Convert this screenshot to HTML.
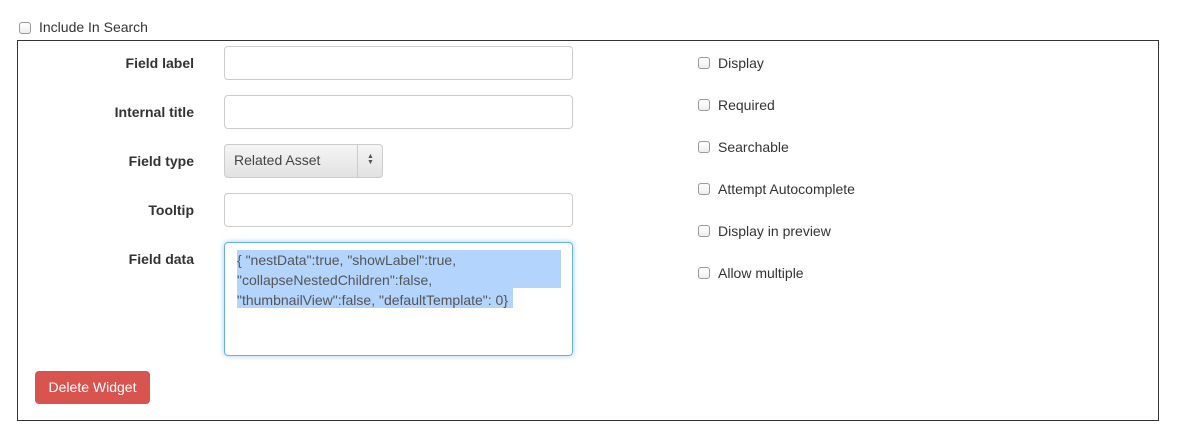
<!DOCTYPE html>
<html><head><style>
body{margin:0;width:1187px;height:440px;background:#fff;font-family:"Liberation Sans",sans-serif;font-size:14px;color:#333;position:relative;overflow:hidden}
.a{position:absolute}
.cb{position:absolute;width:10px;height:10px;border:1px solid #999;border-radius:3px;background:linear-gradient(#fff,#eee)}
.lbl{position:absolute;font-weight:bold;text-align:right;width:180px;left:14px}
.inp{position:absolute;left:224px;width:347px;height:32px;border:1px solid #ccc;border-radius:4px;background:#fff}
.ck{position:absolute;left:718px;font-size:14px}
</style></head><body>
<div class="cb" style="left:19px;top:22px"></div>
<div class="a" style="left:39px;top:19px">Include In Search</div>
<div class="a" style="left:17px;top:40px;width:1140px;height:379px;border:1px solid #333"></div>

<div class="lbl" style="top:55px">Field label</div>
<div class="inp" style="top:46px"></div>
<div class="lbl" style="top:104px">Internal title</div>
<div class="inp" style="top:95px"></div>
<div class="lbl" style="top:153px">Field type</div>
<div class="a" style="left:224px;top:144px;width:157px;height:32px;border:1px solid #ccc;border-radius:4px;background:linear-gradient(#f5f5f5,#e2e2e2)">
<div class="a" style="left:9px;top:7px;color:#444">Related Asset</div>
<div class="a" style="left:132px;top:0;width:1px;height:32px;background:#ccc"></div>
<div class="a" style="left:142px;top:9px;font-size:7px;line-height:6px;color:#555">▲<br>▼</div>
</div>
<div class="lbl" style="top:202px">Tooltip</div>
<div class="inp" style="top:193px"></div>
<div class="lbl" style="top:251px">Field data</div>
<div class="a" style="left:224px;top:242px;width:347px;height:112px;border:1px solid #66afe9;border-radius:4px;box-shadow:0 0 6px rgba(102,175,233,.6)">
<div class="a" style="left:12px;top:7px;width:324px;height:38px;background:#b3d4fc"></div>
<div class="a" style="left:12px;top:45px;width:276px;height:20px;background:#b3d4fc"></div>
<div class="a" style="left:12px;top:7px;line-height:20px;color:#555">{ "nestData":true, "showLabel":true,<br>"collapseNestedChildren":false,<br>"thumbnailView":false, "defaultTemplate": 0}</div>
</div>
<div class="a" style="left:35px;top:371px;width:115px;height:33px;background:#d9534f;border-radius:4px;color:#fff;text-align:center;line-height:33px">Delete Widget</div>

<div class="cb" style="left:698px;top:57px"></div><div class="ck" style="top:55px">Display</div>
<div class="cb" style="left:698px;top:99px"></div><div class="ck" style="top:97px">Required</div>
<div class="cb" style="left:698px;top:141px"></div><div class="ck" style="top:139px">Searchable</div>
<div class="cb" style="left:698px;top:183px"></div><div class="ck" style="top:181px">Attempt Autocomplete</div>
<div class="cb" style="left:698px;top:225px"></div><div class="ck" style="top:223px">Display in preview</div>
<div class="cb" style="left:698px;top:267px"></div><div class="ck" style="top:265px">Allow multiple</div>
</body></html>
